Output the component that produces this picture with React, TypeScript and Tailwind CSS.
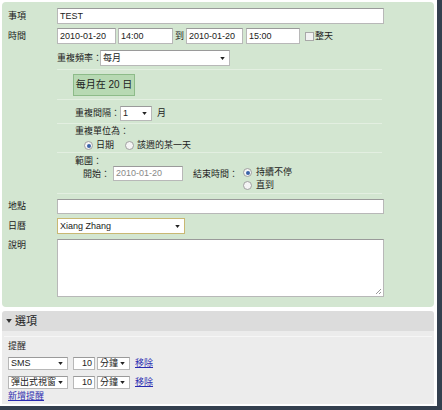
import React from 'react'

const cjk = { fontFamily: '"Liberation Sans", "Noto Sans CJK TC", sans-serif' }

function Box({ w, h = 16, children, className = '' }: { w: number; h?: number; children?: React.ReactNode; className?: string }) {
    return (
        <div
            className={`flex items-center bg-white border border-[#b8b8b8] border-t-[#9a9a9a] px-[2px] text-[9px] text-[#222] leading-none whitespace-nowrap overflow-hidden shrink-0 ${className}`}
            style={{ width: w, height: h }}
        >
            {children}
        </div>
    )
}

function Caret() {
    return (
        <svg width="5" height="3" viewBox="0 0 6 4" className="shrink-0">
            <path d="M0 0h6L3 4z" fill="#222" />
        </svg>
    )
}

function Select({ w, h = 16, label, className = '' }: { w: number; h?: number; label: string; className?: string }) {
    return (
        <Box w={w} h={h} className={`justify-between pr-[4px] ${className}`}>
            <span>{label}</span>
            <Caret />
        </Box>
    )
}

function Radio({ on }: { on?: boolean }) {
    return (
        <span className="w-[9px] h-[9px] rounded-full border border-[#a0a0a0] bg-[#f4f4f4] flex items-center justify-center shrink-0">
            {on && <span className="w-[4px] h-[4px] rounded-full bg-[#3a62a8]" />}
        </span>
    )
}

function Sep() {
    return <div className="h-px bg-[#e3efe1] w-[325px]" />
}

export default function App() {
    return (
        <div className="w-[442px] h-[410px] bg-[#34404f]" style={cjk}>
            <div className="w-[437px] h-[406px] bg-white pt-[2px] pl-[2px] text-[9px] leading-none text-[#222]">
                {/* main event panel */}
                <div className="w-[432px] h-[305px] rounded-[4px] bg-[#d3e6d1] pt-[6px] pl-[6px]">
                    <div className="flex items-center">
                        <span className="w-[49px]">事項</span>
                        <Box w={327}>TEST</Box>
                    </div>

                    <div className="flex items-center mt-[4px]">
                        <span className="w-[49px]">時間</span>
                        <Box w={59}>2010-01-20</Box>
                        <Box w={55} className="ml-[2px]">14:00</Box>
                        <span className="w-[13px] text-center">到</span>
                        <Box w={57}>2010-01-20</Box>
                        <Box w={54} className="ml-[3px]">15:00</Box>
                        <span className="ml-[5px] w-[9px] h-[9px] border border-[#a8a8a8] bg-[#f2f2f2]" />
                        <span className="ml-[1px]">整天</span>
                    </div>

                    {/* repeat options */}
                    <div className="ml-[49px]">
                        <div className="flex items-center mt-[6px]">
                            <span className="mr-[-2px] whitespace-nowrap">重複頻率：</span>
                            <Select w={130} label="每月" />
                        </div>
                        <div className="mt-[3px]"><Sep /></div>

                        <div className="ml-[16px] mt-[4px] w-[62px] h-[22px] bg-[#b7d9b3] border border-[#8dbb89] flex items-center justify-center text-[10px] whitespace-nowrap">
                            每月在 20 日
                        </div>
                        <div className="mt-[3px]"><Sep /></div>

                        <div className="ml-[18px] flex items-center mt-[6px]">
                            <span className="whitespace-nowrap">重複間隔：</span>
                            <Select w={32} h={15} label="1" />
                            <span className="ml-[5px]">月</span>
                        </div>
                        <div className="mt-[2px]"><Sep /></div>

                        <div className="ml-[18px] mt-[3px]">重複單位為：</div>
                        <div className="ml-[27px] mt-[5px] flex items-center gap-[3px]">
                            <Radio on />
                            <span>日期</span>
                            <span className="ml-[8px]"><Radio /></span>
                            <span>該週的某一天</span>
                        </div>
                        <div className="mt-[2px]"><Sep /></div>

                        <div className="ml-[18px] mt-[4px]">範圍：</div>
                        <div className="ml-[26px] flex items-start">
                            <span className="w-[30px] mt-[4px] whitespace-nowrap">開始：</span>
                            <Box w={70} h={15} className="bg-[#e9e9e9] text-[#888]">2010-01-20</Box>
                            <span className="ml-[10px] w-[50px] mt-[4px] whitespace-nowrap">結束時間：</span>
                            <div className="flex flex-col gap-[4px] mt-[2px]">
                                <div className="flex items-center gap-[4px]">
                                    <Radio on />
                                    <span>持續不停</span>
                                </div>
                                <div className="flex items-center gap-[4px]">
                                    <Radio />
                                    <span>直到</span>
                                </div>
                            </div>
                        </div>
                        <div className="mt-[3px]"><Sep /></div>
                    </div>

                    <div className="flex items-center mt-[5px]">
                        <span className="w-[49px]">地點</span>
                        <Box w={327} h={15} />
                    </div>

                    <div className="flex items-center mt-[4px]">
                        <span className="w-[49px]">日曆</span>
                        <Select w={128} label="Xiang Zhang" className="border-[#c9b873] border-t-[#c9b873]" />
                    </div>

                    <div className="flex items-start mt-[5px]">
                        <span className="w-[49px] mt-[2px]">說明</span>
                        <div className="relative w-[327px] h-[58px] bg-white border border-[#b8b8b8] border-t-[#9a9a9a]">
                            <svg width="7" height="7" viewBox="0 0 7 7" className="absolute right-[1px] bottom-[1px]">
                                <path d="M6 1L1 6M6 4L4 6" stroke="#999" strokeWidth="1" />
                            </svg>
                        </div>
                    </div>
                </div>

                {/* options section */}
                <div className="mt-[4px] w-[432px] h-[20px] rounded-t-[3px] bg-[#dcdcdc] flex items-center pl-[4px] text-[11px]">
                    <svg width="6" height="4" viewBox="0 0 7 5" className="mr-[3px]">
                        <path d="M0 0h7L3.5 5z" fill="#333" />
                    </svg>
                    <span>選項</span>
                </div>
                <div className="w-[432px] h-[73px] bg-[#ececec] pt-[5px]">
                    <div className="mx-[2px] h-px bg-[#f6f6f6]" />
                    <div className="pl-[6px]">
                        <div className="mt-[5px]">提醒</div>
                        <div className="flex items-center mt-[6px]">
                            <Select w={60} h={13} label="SMS" />
                            <Box w={22} h={13} className="ml-[5px] justify-end">10</Box>
                            <Select w={33} h={13} label="分鐘" className="ml-[2px]" />
                            <a className="ml-[5px] text-[#2b2bb0] underline">移除</a>
                        </div>
                        <div className="flex items-center mt-[6px]">
                            <Select w={60} h={13} label="彈出式視窗" />
                            <Box w={22} h={13} className="ml-[5px] justify-end">10</Box>
                            <Select w={33} h={13} label="分鐘" className="ml-[2px]" />
                            <a className="ml-[5px] text-[#2b2bb0] underline">移除</a>
                        </div>
                        <a className="block mt-[3px] text-[#2b2bb0] underline">新增提醒</a>
                    </div>
                </div>
            </div>
        </div>
    )
}
